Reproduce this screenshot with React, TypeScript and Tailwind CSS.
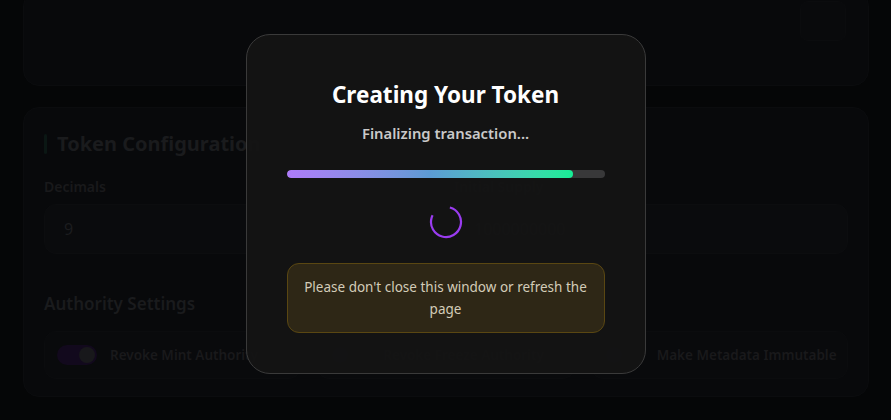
import React from "react";

function Toggle({ on }: { on?: boolean }) {
  return (
    <div
      className={`w-10 h-5 rounded-full flex items-center px-[2px] shrink-0 ${
        on ? "bg-[#12091d] justify-end" : "bg-[#0d0e10] justify-start"
      }`}
    >
      <div className={`w-4 h-4 rounded-full ${on ? "bg-[#18181b]" : "bg-[#111214]"}`} />
    </div>
  );
}

function Spinner() {
  return (
    <svg width="34" height="34" viewBox="0 0 34 34">
      <circle
        cx="17"
        cy="17"
        r="15"
        fill="none"
        stroke="#9a3cf0"
        strokeWidth="2.2"
        strokeDasharray="73.3 94.2"
        transform="rotate(-75 17 17)"
      />
    </svg>
  );
}

export default function App() {
  return (
    <div className="relative w-full h-[420px] overflow-hidden bg-[#050607] font-['Noto_Sans',sans-serif]">
      {/* background page */}
      <div className="flex flex-col gap-[21px] px-[23px] pr-[22px]">
        <div className="h-[96px] -mt-[10px] rounded-2xl bg-[#08090b] border border-[#0b0c0e] flex justify-end items-start pr-[22px] pt-[10px]">
          <div className="w-[46px] h-[40px] rounded-lg bg-[#090a0c] border border-[#0b0c0e]" />
        </div>
        <div className="h-[290px] rounded-2xl bg-[#08090b] border border-[#0b0c0e] px-5 pt-[22px]">
          <div className="flex items-center gap-[10px] h-7">
            <div className="w-[3px] h-[20px] rounded bg-[#0b1714]" />
            <div className="text-[20px] font-bold text-[#1a1b1d] leading-7">Token Configuration</div>
          </div>
          <div className="grid grid-cols-2 gap-4 mt-[19px]">
            <div className="flex flex-col gap-[7px]">
              <div className="text-[14px] font-semibold leading-5 text-[#19191b]">Decimals</div>
              <div className="h-[50px] rounded-xl bg-[#0a0b0d] border border-[#0c0d0f] flex items-center px-[19px] text-[16px] text-[#1c1d1f]">
                9
              </div>
            </div>
            <div className="flex flex-col gap-[7px]">
              <div className="text-[14px] font-semibold leading-5 text-[#19191b]">Initial Supply</div>
              <div className="h-[50px] rounded-xl bg-[#0a0b0d] border border-[#0c0d0f] flex items-center px-[19px] text-[16px] text-[#1c1d1f]">
                1000000000
              </div>
            </div>
          </div>
          <div className="mt-[38px] text-[17px] font-semibold leading-6 text-[#1a1b1d]">Authority Settings</div>
          <div className="grid grid-cols-3 gap-4 mt-[15px]">
            <div className="h-[48px] rounded-xl bg-[#090a0c] border border-[#0b0c0e] flex items-center gap-[13px] px-3">
              <Toggle on />
              <span className="whitespace-nowrap text-[13.5px] font-semibold text-[#19191b]">Revoke Mint Authority</span>
            </div>
            <div className="h-[48px] rounded-xl bg-[#090a0c] border border-[#0b0c0e] flex items-center gap-[13px] px-3">
              <Toggle />
              <span className="whitespace-nowrap text-[13.5px] font-semibold text-[#19191b]">Revoke Freeze Authority</span>
            </div>
            <div className="h-[48px] rounded-xl bg-[#090a0c] border border-[#0b0c0e] flex items-center gap-[13px] px-3">
              <Toggle />
              <span className="whitespace-nowrap text-[13.5px] font-semibold text-[#19191b]">Make Metadata Immutable</span>
            </div>
          </div>
        </div>
      </div>

      {/* overlay + modal */}
      <div className="absolute inset-0 flex justify-center items-start pt-[34px]">
        <div className="w-[400px] h-[340px] rounded-3xl bg-[#141414]/[0.95] border border-[#3a3a3a] px-10 pt-[46px] flex flex-col items-center">
          <div className="text-[22.5px] font-bold leading-7 text-white">Creating Your Token</div>
          <div className="mt-[14px] text-[14.8px] font-semibold leading-5 text-[#c9c9c9]">Finalizing transaction...</div>
          <div className="mt-[27px] w-full h-2 rounded-full bg-[#383839] overflow-hidden">
            <div className="h-full w-[90%] rounded-full bg-gradient-to-r from-[#ae7bfa] via-[#5c9bd4] to-[#14ee95]" />
          </div>
          <div className="mt-[27px]">
            <Spinner />
          </div>
          <div className="mt-[24px] w-full h-[70px] rounded-xl bg-[#2e2716] border border-[#5a4712] flex items-center justify-center px-2 text-center text-[13.5px] leading-[22px] text-[#d3ccb8]">
            Please don't close this window or refresh the page
          </div>
        </div>
      </div>
    </div>
  );
}
